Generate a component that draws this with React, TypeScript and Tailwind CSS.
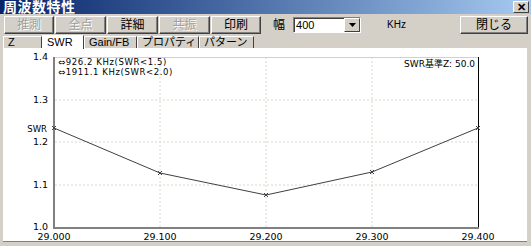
import React from "react"

const font = { fontFamily: '"Liberation Sans", "Noto Sans CJK JP", sans-serif' }
const chartFont = { fontFamily: '"DejaVu Sans", "Noto Sans CJK JP", sans-serif' }

function Btn({ label, disabled, w }: { label: string; disabled?: boolean; w: string }) {
  return (
    <div
      className={`${w} h-[18px] flex items-center justify-center text-[12px] leading-none border border-t-white border-l-white border-r-[#404040] border-b-[#404040] shadow-[inset_-1px_-1px_0_#808080] bg-[#d4d0c8] ${
        disabled ? "text-[#a0a0a0] [text-shadow:1px_1px_0_#ffffff]" : "text-black"
      }`}
    >
      {label}
    </div>
  )
}

function Tab({ label, w, active }: { label: string; w: string; active?: boolean }) {
  return (
    <div
      className={`${w} flex items-center pl-[4px] whitespace-nowrap text-[11px] leading-none border-t border-l border-white border-r border-r-[#404040] ${
        active ? "h-[14px] bg-white -mb-[1px] relative z-10" : "h-[12px] bg-[#d4d0c8]"
      }`}
    >
      {label}
    </div>
  )
}

const xs = [54, 160, 266, 372, 478]
const xl = ["29.000", "29.100", "29.200", "29.300", "29.400"]
const ys = [56, 99, 141, 184, 227]
const yl = ["1.4", "1.3", "1.2", "1.1", "1.0"]
const pts = [
  [54, 127],
  [160, 172],
  [266, 194],
  [372, 171],
  [478, 127],
]

function Chart() {
  return (
    <svg width="524" height="192" viewBox="3 48 524 192" className="block">
      <rect x="3" y="48" width="524" height="192" fill="#ffffff" />
      {[99, 141, 184].map((y) => (
        <line key={y} x1="55" x2="477" y1={y} y2={y} stroke="#d8d8c8" strokeDasharray="2 2" />
      ))}
      {[160, 266, 372].map((x) => (
        <line key={x} x1={x} x2={x} y1="56" y2="226" stroke="#d8d8c8" strokeDasharray="2 2" />
      ))}
      <line x1="54" x2="478" y1="56.5" y2="56.5" stroke="#d0d0d0" />
      <line x1="478.5" x2="478.5" y1="56" y2="227" stroke="#000000" />
      <line x1="54" x2="54" y1="56" y2="227" stroke="#808080" strokeWidth="2" />
      <line x1="53" x2="479" y1="227" y2="227" stroke="#808080" strokeWidth="2" />
      <polyline points={pts.map((p) => p.join(",")).join(" ")} fill="none" stroke="#404040" strokeWidth="1" />
      {pts.map(([x, y]) => (
        <g key={x} stroke="#404040">
          <line x1={x - 2} x2={x + 2} y1={y - 2} y2={y + 2} />
          <line x1={x - 2} x2={x + 2} y1={y + 2} y2={y - 2} />
        </g>
      ))}
      <g fontSize="9.5" fill="#000" style={chartFont}>
        {ys.map((y, i) => (
          <text key={y} x="48" y={i === 4 ? 229 : y + 3} textAnchor="end">
            {yl[i]}
          </text>
        ))}
        <text x="47" y="131" textAnchor="end" fontSize="8.5">
          SWR
        </text>
        {xs.map((x, i) => (
          <text key={x} x={x} y="239" textAnchor="middle">
            {xl[i]}
          </text>
        ))}
        <text x="58" y="64" fontSize="8.5" letterSpacing="0.6">
          ⇔926.2 KHz(SWR&lt;1.5)
        </text>
        <text x="58" y="74" fontSize="8.5" letterSpacing="0.6">
          ⇔1911.1 KHz(SWR&lt;2.0)
        </text>
        <text x="475" y="66" textAnchor="end" fontSize="9">
          SWR基準Z: 50.0
        </text>
      </g>
    </svg>
  )
}

export default function App() {
  return (
    <div className="w-[531px] h-[246px] bg-[#d4d0c8] flex flex-col overflow-hidden" style={font}>
      <div className="h-[14px] flex items-center justify-between bg-gradient-to-r from-[#0a246a] to-[#a6caf0] pl-[3px] pr-[2px]">
        <span className="text-white text-[14px] font-bold leading-none tracking-[0.5px]">周波数特性</span>
        <div className="w-[16px] h-[12px] flex items-center justify-center bg-[#d4d0c8] border border-t-white border-l-white border-r-[#404040] border-b-[#404040] text-[11px] font-bold leading-none">
          ✕
        </div>
      </div>
      <div className="h-[20px] flex items-center pl-[4px] pt-[1px]">
        <div className="flex gap-[1px]">
          <Btn label="推測" disabled w="w-[50px]" />
          <Btn label="全点" disabled w="w-[51px]" />
          <Btn label="詳細" w="w-[51px]" />
          <Btn label="共振" disabled w="w-[51px]" />
          <Btn label="印刷" w="w-[50px]" />
        </div>
        <span className="ml-[12px] text-[12px] leading-none">幅</span>
        <div className="ml-[8px] w-[68px] h-[16px] flex bg-white border border-t-[#808080] border-l-[#808080] border-r-white border-b-white shadow-[inset_1px_1px_0_#404040]">
          <span className="flex-1 pl-[2px] text-[11px] leading-[14px]">400</span>
          <div className="w-[16px] h-[14px] flex items-center justify-center bg-[#d4d0c8] border border-t-white border-l-white border-r-[#404040] border-b-[#404040]">
            <svg width="7" height="4" viewBox="0 0 7 4">
              <path d="M0 0h7L3.5 4z" fill="#000" />
            </svg>
          </div>
        </div>
        <span className="ml-[26px] text-[10px] leading-none">KHz</span>
        <div className="ml-auto mr-[3px]">
          <Btn label="閉じる" w="w-[68px]" />
        </div>
      </div>
      <div className="flex items-end pl-[3px] h-[14px]">
        <Tab label="Z" w="w-[39px]" />
        <Tab label="SWR" w="w-[42px]" active />
        <Tab label="Gain/FB" w="w-[53px]" />
        <Tab label="プロパティ" w="w-[62px]" />
        <Tab label="パターン" w="w-[55px]" />
      </div>
      <div className="ml-[3px] w-[524px] border-t border-white">
        <Chart />
      </div>
      <div className="h-[1px] ml-[3px] w-[524px] bg-[#808080]" />
    </div>
  )
}
